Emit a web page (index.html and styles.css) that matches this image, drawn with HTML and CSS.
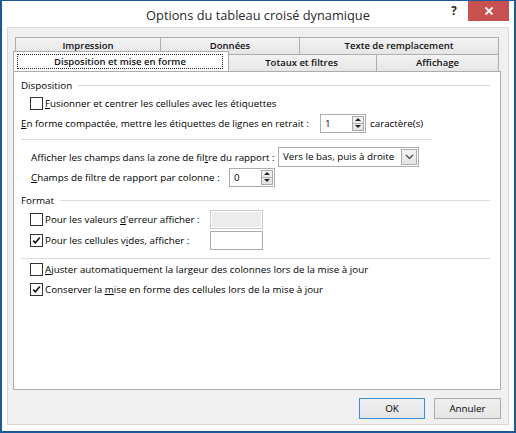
FILE: index.html
```html
<!DOCTYPE html>
<html lang="fr">
<head>
<meta charset="utf-8">
<title>Options du tableau croisé dynamique</title>
<link rel="stylesheet" href="styles.css">
</head>
<body>
<div class="window">
  <div class="titlebar">
    <div></div>
    <div class="title">Options du tableau croisé dynamique</div>
    <div class="caption-btns">
      <div class="help">?</div>
      <div class="close"><svg width="10" height="10" viewBox="0 0 10 10"><path d="M1.5 1.5L8.5 8.5M8.5 1.5L1.5 8.5" stroke="#fff" stroke-width="1.8" fill="none"/></svg></div>
    </div>
  </div>
  <div class="client">
    <div class="tabctl">
      <div class="tabrow">
        <div class="tab w-impr">Impression</div>
        <div class="tab w-donnees">Données</div>
        <div class="tab w-texte">Texte de remplacement</div>
      </div>
      <div class="tabrow">
        <div class="tab sel w-dispo"><span class="focus">Disposition et mise en forme</span></div>
        <div class="tab w-totaux">Totaux et filtres</div>
        <div class="tab w-affich">Affichage</div>
      </div>
      <div class="panel">
        <div class="group"><span>Disposition</span><span class="rule"></span></div>
        <div class="row ind-cb">
          <span class="cb"></span><span class="lbl"><u>F</u>usionner et centrer les cellules avec les étiquettes</span>
        </div>
        <div class="row">
          <span class="lbl w-compact"><u>E</u>n forme compactée, mettre les étiquettes de lignes en retrait :</span>
          <span class="spin"><span class="val">1</span><span class="spinbtn"><span class="up"></span><span class="dn"></span></span></span>
          <span class="lbl after">caractère(s)</span>
        </div>
        <div class="sep short"></div>
        <div class="row first-after-sep ind-lbl">
          <span class="lbl w-afficher">Afficher les champs dans la zone de fil<u>t</u>re du rapport :</span>
          <span class="combo"><span class="val">Vers le bas, puis à droite</span><span class="combobtn"><svg width="9" height="6" viewBox="0 0 9 6"><path d="M1 1L4.5 4.5L8 1" stroke="#444" stroke-width="1.2" fill="none"/></svg></span></span>
        </div>
        <div class="row ind-lbl">
          <span class="lbl w-champs"><u>C</u>hamps de filtre de rapport par colonne :</span>
          <span class="spin"><span class="val">0</span><span class="spinbtn"><span class="up"></span><span class="dn"></span></span></span>
        </div>
        <div class="group format"><span>Format</span><span class="rule"></span></div>
        <div class="row tall first-fmt ind-cb">
          <span class="field"><span class="cb"></span><span class="lbl">Pour les valeurs <u>d</u>'erreur afficher :</span></span>
          <span class="txt disabled"></span>
        </div>
        <div class="row tall ind-cb">
          <span class="field"><span class="cb checked"><svg width="11" height="11" viewBox="0 0 11 11"><path d="M2.2 5.6L4.4 7.8L8.8 2.6" stroke="#111" stroke-width="1.6" fill="none"/></svg></span><span class="lbl">Pour les cellules v<u>i</u>des, afficher :</span></span>
          <span class="txt"></span>
        </div>
        <div class="sep long"></div>
        <div class="row r19 first-after-sep2 ind-cb">
          <span class="cb"></span><span class="lbl"><u>A</u>juster automatiquement la largeur des colonnes lors de la mise à jour</span>
        </div>
        <div class="row ind-cb">
          <span class="cb checked"><svg width="11" height="11" viewBox="0 0 11 11"><path d="M2.2 5.6L4.4 7.8L8.8 2.6" stroke="#111" stroke-width="1.6" fill="none"/></svg></span><span class="lbl">Conserver la <u>m</u>ise en forme des cellules lors de la mise à jour</span>
        </div>
      </div>
    </div>
    <div class="buttons">
      <div class="btn default">OK</div>
      <div class="btn w-cancel">Annuler</div>
    </div>
  </div>
</div>
</body>
</html>
```
FILE: styles.css
```css
* { box-sizing: border-box; }
html, body { margin: 0; padding: 0; background: #fff; }
body {
  font-family: "Open Sans", "Noto Sans", sans-serif;
  font-size: 9.8px;
  color: #000;
}
.window {
  width: 516px;
  height: 433px;
  border: 2px solid #1a5b9c;
  border-top-width: 1px;
  background: #fff;
  display: flex;
  flex-direction: column;
}
.titlebar {
  height: 26px;
  display: grid;
  grid-template-columns: 1fr auto 1fr;
  align-items: start;
}
.title {
  font-size: 12.8px;
  line-height: 26px;
  color: #2a2a2a;
  padding-top: 1px;
}
.caption-btns {
  display: flex;
  justify-content: flex-end;
  align-items: flex-start;
  padding-right: 5px;
}
.help {
  font-weight: 700;
  font-size: 11.5px;
  line-height: 20px;
  width: 14px;
  margin-right: 7px;
  color: #222;
  text-align: center;
}
.close {
  width: 41px;
  height: 20px;
  background: #c75050;
  display: flex;
  align-items: center;
  justify-content: center;
}
.client {
  margin: 0 5px;
  height: 398px;
  border: 1px solid #d9d9d9;
  background: #f0f0f0;
  padding: 9px 7px 0 5px;
  display: flex;
  flex-direction: column;
}
.tabctl { display: flex; flex-direction: column; }
.tabrow {
  display: flex;
  height: 17px;
  margin-left: 2px;
  margin-right: 1px;
}
.tab {
  height: 17px;
  border: 1px solid #adadad;
  border-left: none;
  border-bottom: none;
  background: linear-gradient(#f3f3f3, #e6e6e6);
  text-align: center;
  font-weight: 600;
  font-size: 9.5px;
  line-height: 16px;
  color: #111;
  white-space: nowrap;
}
.tab:first-child { border-left: 1px solid #adadad; }
.tab.sel {
  background: #fff;
  height: 20px;
  margin: -3px -2px -1px -2px;
  padding: 2px 5px 2px 3px;
  border-left: 1px solid #adadad;
  position: relative;
  z-index: 1;
}
.focus {
  display: block;
  height: 15px;
  line-height: 13px;
  border: 1px dotted #222;
}
.w-impr { width: 146px; }
.w-donnees { width: 139px; }
.w-texte { width: 199px; }
.w-dispo { width: 216px; }
.w-totaux { width: 150px; }
.w-affich { width: 122px; }
.panel {
  height: 319px;
  background: #fff;
  border: 1px solid #adadad;
  padding: 5px 10px 0 7px;
  display: flex;
  flex-direction: column;
}
.group {
  display: flex;
  align-items: center;
  height: 16px;
  white-space: nowrap;
}
.group .rule {
  flex: 1;
  height: 1px;
  background: #dcdcdc;
  margin-left: 6px;
}
.group.format { margin-top: 5px; }
.row {
  display: flex;
  align-items: center;
  height: 20px;
  white-space: nowrap;
}
.row.tall { height: 21px; }
.row.r19 { height: 19px; }
.first-after-sep { margin-top: 7px; }
.first-fmt { margin-top: 1px; }
.first-after-sep2 { margin-top: 1px; }
.ind-cb { padding-left: 9px; }
.ind-lbl { padding-left: 10px; }
.sep { height: 1px; background: #dcdcdc; margin-top: 6px; }
.sep.short { width: 411px; }
.sep.long { margin-top: 7px; }
.cb {
  width: 13px;
  height: 13px;
  border: 1px solid #333;
  background: #fff;
  flex: none;
  margin-right: 2px;
  display: flex;
  align-items: center;
  justify-content: center;
}
.lbl { display: inline-block; }
.w-compact { width: 299px; }
.w-afficher { width: 247px; }
.w-champs { width: 198px; }
.after { margin-left: 4px; }
.field { display: flex; align-items: center; width: 180px; }
.spin {
  width: 46px;
  height: 19px;
  border: 1px solid #abadb3;
  background: #fff;
  display: flex;
  align-items: stretch;
  padding: 1px;
}
.spin .val { flex: 1; padding-left: 3px; line-height: 15px; }
.spinbtn {
  width: 12px;
  border: 1px solid #a8a8a8;
  display: flex;
  flex-direction: column;
  background: linear-gradient(#f4f4f4, #e2e2e2);
}
.spinbtn .up, .spinbtn .dn {
  flex: 1;
  display: flex;
  align-items: center;
  justify-content: center;
}
.spinbtn .up { border-bottom: 1px solid #b0b0b0; }
.spinbtn .up::before {
  content: "";
  border-left: 3px solid transparent;
  border-right: 3px solid transparent;
  border-bottom: 3px solid #222;
}
.spinbtn .dn::before {
  content: "";
  border-left: 3px solid transparent;
  border-right: 3px solid transparent;
  border-top: 3px solid #222;
}
.combo {
  width: 141px;
  height: 20px;
  border: 1px solid #abadb3;
  background: #fff;
  display: flex;
  align-items: stretch;
}
.combo .val { flex: 1; padding-left: 4px; line-height: 17px; }
.combobtn {
  width: 16px;
  margin: 1px;
  border: 1px solid #acacac;
  background: linear-gradient(#f2f2f2, #e5e5e5);
  display: flex;
  align-items: center;
  justify-content: center;
}
.txt {
  width: 53px;
  height: 19px;
  border: 1px solid #abadb3;
  background: #fff;
}
.txt.disabled {
  border-color: #c9c9c9;
  background: #ececec;
  box-shadow: inset 0 0 0 1px #fff;
}
.buttons {
  display: flex;
  justify-content: flex-end;
  gap: 9px;
  margin-top: 8px;
}
.btn {
  width: 66px;
  height: 21px;
  border: 1px solid #acacac;
  background: linear-gradient(#f0f0f0, #e5e5e5);
  text-align: center;
  line-height: 19px;
  color: #000;
}
.btn.default { border-color: #3c8fd6; }
.btn.w-cancel { width: 67px; }
```
